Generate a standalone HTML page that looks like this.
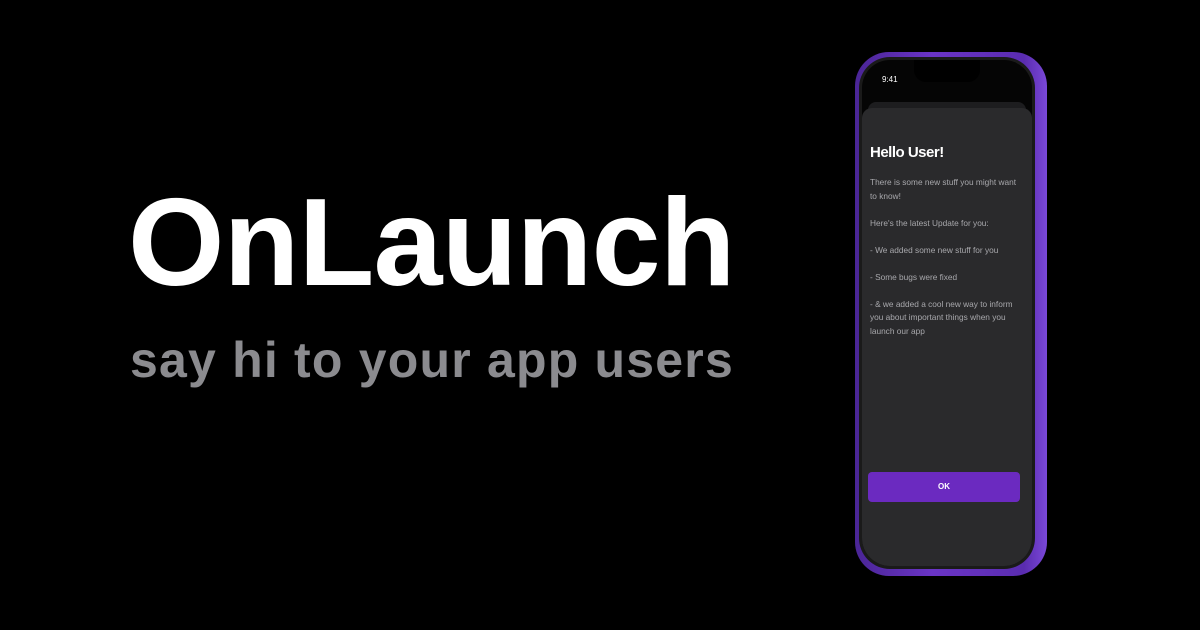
<!DOCTYPE html>
<html><head><meta charset="utf-8"><style>
*{margin:0;padding:0;box-sizing:border-box}
body{width:1200px;height:630px;background:#000;overflow:hidden;position:relative;font-family:"Liberation Sans",sans-serif}
.t1{position:absolute;left:128px;top:178px;font-size:124px;font-weight:bold;color:#fff;letter-spacing:-0.8px;line-height:130px}
.t2{position:absolute;left:130px;top:330px;font-size:50px;font-weight:bold;color:#8b8b8f;letter-spacing:1.2px;line-height:60px}
.phone{position:absolute;left:855px;top:52px;width:192px;height:524px;border-radius:34px;background:linear-gradient(90deg,#4a2596,#6a34c6 40%,#5a2cb0 88%,#7a48d8);}
.bezel{position:absolute;left:4px;top:5px;width:176px;height:512px;border-radius:31px;background:#1a1a1a}
.screen{position:absolute;left:3px;top:3px;width:170px;height:506px;border-radius:28px;background:#050505;overflow:hidden}
.notch{position:absolute;left:52px;top:0;width:66px;height:22px;background:#000;border-radius:0 0 12px 12px}
.time{position:absolute;left:20px;top:15px;color:#fff;font-size:8px}
.card0{position:absolute;left:6px;top:42px;width:158px;height:20px;background:#1d1d1f;border-radius:8px}
.card{position:absolute;left:0;top:48px;width:170px;height:460px;background:#2a2a2c;border-radius:10px 10px 0 0}
.h{position:absolute;left:8px;top:36px;color:#fff;font-weight:bold;font-size:15px;letter-spacing:-.5px}
.p{position:absolute;left:8px;top:68px;width:152px;color:#a8a8ac;font-size:8.3px;line-height:13.5px}
.ok{position:absolute;left:6px;top:364px;width:152px;height:30px;background:#6b2ac0;border-radius:4px;color:#fff;font-size:8px;font-weight:bold;text-align:center;line-height:30px}
.home{position:absolute;left:54px;top:486px;width:60px;height:3px;border-radius:2px;background:#000}
</style></head><body>
<div class="t1">OnLaunch</div>
<div class="t2">say hi to your app users</div>
<div class="phone"><div class="bezel"><div class="screen">
<div class="time">9:41</div>
<div class="notch"></div>
<div class="card0"></div>
<div class="card">
<div class="h">Hello User!</div>
<div class="p">There is some new stuff you might want to know!<br><br>Here's the latest Update for you:<br><br>- We added some new stuff for you<br><br>- Some bugs were fixed<br><br>- &amp; we added a cool new way to inform you about important things when you launch our app</div>
<div class="ok">OK</div>
<div class="home"></div>
</div>
</div></div></div>
</body></html>
